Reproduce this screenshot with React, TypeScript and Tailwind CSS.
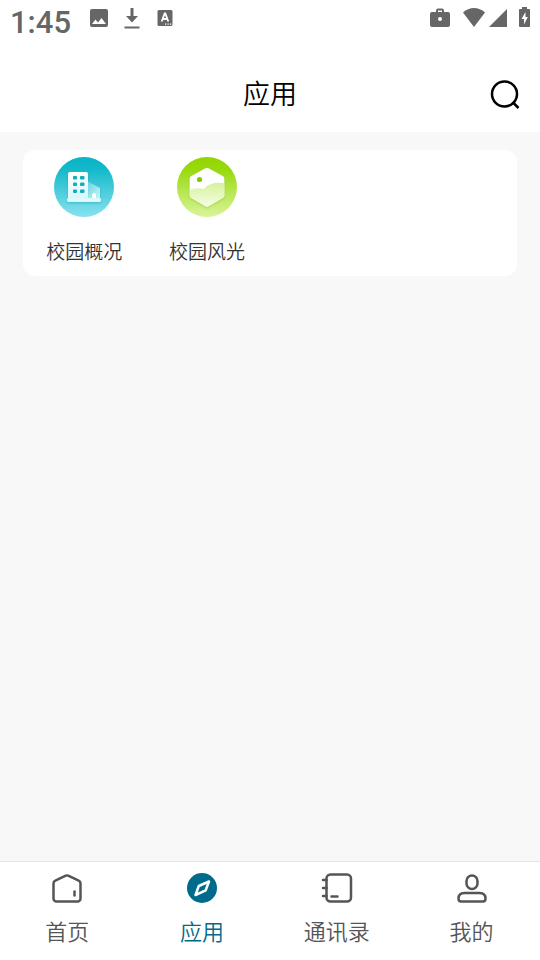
import type { ReactNode } from "react";

function StatusBar() {
  return (
    <div className="flex h-9 items-center justify-between px-[10px] text-[#666]">
      <div className="flex items-center">
        <span className="pt-[10px] font-['Roboto',sans-serif] text-[31px] leading-9 font-medium">1:45</span>
        <svg className="ml-4 h-6 w-6" viewBox="0 0 24 24" fill="currentColor" aria-hidden="true">
          <path d="M21 19V5a2 2 0 0 0-2-2H5a2 2 0 0 0-2 2v14c0 1.100.9 2 2 2h14a2 2 0 0 0 2-2zM8.500 13.500l2.500 3 3.500-4.500 4.500 6H5z" />
        </svg>
        <svg className="ml-[9px] h-6 w-6" viewBox="0 0 24 24" fill="currentColor" aria-hidden="true">
          <path d="M10.500 2h3v8h4.500l-6 6.500L6 10h4.500zM4.500 20.500h15v2h-15z" />
        </svg>
        <svg className="ml-[9px] h-6 w-6" viewBox="0 0 24 24" aria-hidden="true">
          <rect x="4.500" y="4" width="15" height="16" rx="1.500" fill="currentColor" />
          <path d="M8.700 15.500l3-8h.6l3 8M9.800 13h4.400" fill="none" stroke="#fff" strokeWidth="1.800" />
          <path d="M12 17.500h1.300v1.300H12zM14.500 17.500h1.300v1.300h-1.300zM17 17.500h1.300v1.300H17z" fill="#fff" />
        </svg>
      </div>
      <div className="flex items-center">
        <svg className="h-6 w-6" viewBox="0 0 24 24" fill="currentColor" fillRule="evenodd" aria-hidden="true">
          <path d="M20 6h-4V4.500a2 2 0 0 0-2-2h-4a2 2 0 0 0-2 2V6H4a2 2 0 0 0-2 2v11c0 1.100.9 2 2 2h16a2 2 0 0 0 2-2V8a2 2 0 0 0-2-2zM10 4.500h4V6h-4zM12 11a2 2 0 1 1 0 4 2 2 0 0 1 0-4z" />
        </svg>
        <svg className="ml-[10px] h-6 w-6" viewBox="0 0 24 24" fill="currentColor" aria-hidden="true">
          <path d="M12 21L1 6.500C4.200 3.600 8 2 12 2s7.800 1.600 11 4.500z" />
        </svg>
        <svg className="ml-[2px] h-6 w-5" viewBox="0 0 20 24" fill="currentColor" aria-hidden="true">
          <path d="M19 3v18H1z" />
        </svg>
        <svg className="ml-[11px] h-6 w-[11px]" viewBox="0 0 11 24" aria-hidden="true">
          <path d="M3 1h5v2h2a1 1 0 0 1 1 1v16a1 1 0 0 1-1 1H1a1 1 0 0 1-1-1V4a1 1 0 0 1 1-1h2z" fill="currentColor" />
          <path d="M6.500 6L2.500 13H5v5.500L8.800 11H6.500z" fill="#fff" />
        </svg>
      </div>
    </div>
  );
}

function CampusIcon() {
  return (
    <svg className="h-15 w-15" viewBox="0 0 60 60" aria-hidden="true">
      <defs>
        <linearGradient id="campus-bg" x1="0" y1="0" x2="0" y2="1">
          <stop offset="0" stopColor="#08b4c6" />
          <stop offset="0.2" stopColor="#13b9ca" />
          <stop offset="1" stopColor="#8ae2ef" />
        </linearGradient>
        <linearGradient id="campus-tower" x1="0" y1="0" x2="0" y2="1">
          <stop offset="0" stopColor="#fff" />
          <stop offset="1" stopColor="#d6f8fb" />
        </linearGradient>
        <linearGradient id="campus-wing" x1="0" y1="0" x2="1" y2="1">
          <stop offset="0" stopColor="#62d3df" />
          <stop offset="1" stopColor="#c9f5f9" />
        </linearGradient>
        <filter id="campus-shadow" x="-20%" y="-20%" width="140%" height="150%">
          <feDropShadow dx="0" dy="1" stdDeviation="1.200" floodColor="#079db2" floodOpacity="0.5" />
        </filter>
      </defs>
      <circle cx="30" cy="30" r="30" fill="url(#campus-bg)" />
      <g filter="url(#campus-shadow)">
        <path d="M33 24l13 7v11H33z" fill="url(#campus-wing)" />
        <path d="M14 17a2 2 0 0 1 2-2h16a2 2 0 0 1 2 2v25H14z" fill="url(#campus-tower)" />
        <rect x="13" y="41" width="34" height="4" rx="1.500" fill="#dcfafd" />
      </g>
      <path d="M38 41v-3a2 2 0 0 1 4 0v3z" fill="#fff" />
      <g fill="#12aebf">
        <rect x="19" y="19" width="4" height="3.500" rx="1" />
        <rect x="26" y="19" width="4.500" height="3.500" rx="1" />
        <rect x="19" y="25.500" width="4" height="3.500" rx="1" />
        <rect x="26" y="25.500" width="4.500" height="3.500" rx="1" />
        <rect x="19" y="32.500" width="4" height="3.500" rx="1" />
        <rect x="26" y="32.500" width="4.500" height="3.500" rx="1" />
      </g>
    </svg>
  );
}

function SceneryIcon() {
  return (
    <svg className="h-15 w-15" viewBox="0 0 60 60" aria-hidden="true">
      <defs>
        <linearGradient id="scenery-bg" x1="0" y1="0" x2="0" y2="1">
          <stop offset="0" stopColor="#91d500" />
          <stop offset="0.2" stopColor="#98d90c" />
          <stop offset="1" stopColor="#d9f59b" />
        </linearGradient>
        <linearGradient id="scenery-hill" x1="0" y1="0" x2="0" y2="1">
          <stop offset="0" stopColor="#d5f29b" />
          <stop offset="1" stopColor="#f8feec" />
        </linearGradient>
        <filter id="scenery-shadow" x="-20%" y="-20%" width="140%" height="150%">
          <feDropShadow dx="0" dy="1" stdDeviation="1.200" floodColor="#78b800" floodOpacity="0.5" />
        </filter>
        <clipPath id="scenery-clip">
          <path d="M28.500 11.300a3 3 0 0 1 3 0l14.500 8a2.500 2.500 0 0 1 1.300 2.200v17a2.500 2.500 0 0 1-1.300 2.200l-14.500 8.500a3 3 0 0 1-3 0L14 40.700a2.500 2.500 0 0 1-1.300-2.200v-17a2.500 2.500 0 0 1 1.300-2.200z" />
        </clipPath>
      </defs>
      <circle cx="30" cy="30" r="30" fill="url(#scenery-bg)" />
      <path
        d="M28.500 11.300a3 3 0 0 1 3 0l14.500 8a2.500 2.500 0 0 1 1.300 2.200v17a2.500 2.500 0 0 1-1.300 2.200l-14.500 8.500a3 3 0 0 1-3 0L14 40.700a2.500 2.500 0 0 1-1.300-2.200v-17a2.500 2.500 0 0 1 1.300-2.200z"
        fill="#fff"
        filter="url(#scenery-shadow)"
      />
      <g clipPath="url(#scenery-clip)">
        <path d="M12 34c3-2.500 8-3.500 15-2 4-5 11-7.500 21-5.500V52H12z" fill="url(#scenery-hill)" />
      </g>
      <circle cx="22.500" cy="22.500" r="2.600" fill="#86c800" />
    </svg>
  );
}

function AppTile({ label, icon }: { label: string; icon: ReactNode }) {
  return (
    <a href="#" className="flex flex-col items-center gap-5 pt-[7px] pb-3">
      {icon}
      <span className="text-[19px] leading-[27px] text-[#333]">{label}</span>
    </a>
  );
}

function NavItem({ label, active, icon }: { label: string; active?: boolean; icon: ReactNode }) {
  return (
    <a
      href="#"
      aria-current={active ? "page" : undefined}
      className={`flex flex-1 flex-col items-center gap-[10px] pt-[10px] pb-[14px] ${active ? "text-[#006b8a]" : "text-[#555]"}`}
    >
      {icon}
      <span className="text-[22px] leading-8">{label}</span>
    </a>
  );
}

const line = "h-8 w-8 fill-none stroke-current stroke-[2.500]";

export default function App() {
  return (
    <div className="flex min-h-screen flex-col bg-[#f8f8f8] font-['Noto_Sans_CJK_SC',sans-serif] font-[350]">
      <header className="bg-white">
        <StatusBar />
        <div className="grid h-24 grid-cols-[1fr_auto_1fr] items-center px-5 pt-5">
          <h1 className="col-start-2 pb-0.5 text-[27px] leading-9 font-[350] text-black">应用</h1>
          <button type="button" aria-label="搜索" className="justify-self-end">
            <svg className="h-8 w-8" viewBox="0 0 32 32" fill="none" stroke="#000" strokeWidth="2.500" aria-hidden="true">
              <circle cx="16.500" cy="16" r="12.500" />
              <path d="M24.500 24l6 6" />
            </svg>
          </button>
        </div>
      </header>

      <main className="flex-1 px-[23px] pt-[18px]">
        <section className="grid grid-cols-4 rounded-xl bg-white pr-[3px]">
          <AppTile label="校园概况" icon={<CampusIcon />} />
          <AppTile label="校园风光" icon={<SceneryIcon />} />
        </section>
      </main>

      <nav className="flex border-t border-[#e5e5e5] bg-white pr-px">
        <NavItem
          label="首页"
          icon={
            <svg className={line} viewBox="0 0 32 32" aria-hidden="true">
              <path d="M2.500 11.500a3 3 0 0 1 1.800-2.800l10.500-5a3 3 0 0 1 2.400 0l10.500 5a3 3 0 0 1 1.800 2.800V26.500a3 3 0 0 1-3 3h-21a3 3 0 0 1-3-3z" />
              <path d="M23.500 19.500v4" strokeLinecap="round" />
            </svg>
          }
        />
        <NavItem
          label="应用"
          active
          icon={
            <svg className="h-8 w-8" viewBox="0 0 32 32" aria-hidden="true">
              <circle cx="16" cy="16" r="15" fill="currentColor" />
              <path d="M23 9.500l-3.300 8.800L9.500 23l3.300-9z" fill="none" stroke="#fff" strokeWidth="2.500" strokeLinejoin="round" />
            </svg>
          }
        />
        <NavItem
          label="通讯录"
          icon={
            <svg className={line} viewBox="0 0 32 32" strokeLinecap="round" aria-hidden="true">
              <rect x="5.500" y="2.500" width="24.500" height="27" rx="4" />
              <path d="M2 8h3.500M2 16h3.500M2 24h3.500M10.500 24.500h6" />
            </svg>
          }
        />
        <NavItem
          label="我的"
          icon={
            <svg className={line} viewBox="0 0 32 32" aria-hidden="true">
              <rect x="10.500" y="3.500" width="11" height="13.500" rx="5.500" />
              <path d="M2.500 26.500c0-4 2-5.500 6-5.500h15c4 0 6 1.500 6 5.500 0 2-.8 3-2.500 3H5c-1.700 0-2.500-1-2.500-3z" />
            </svg>
          }
        />
      </nav>
    </div>
  );
}
